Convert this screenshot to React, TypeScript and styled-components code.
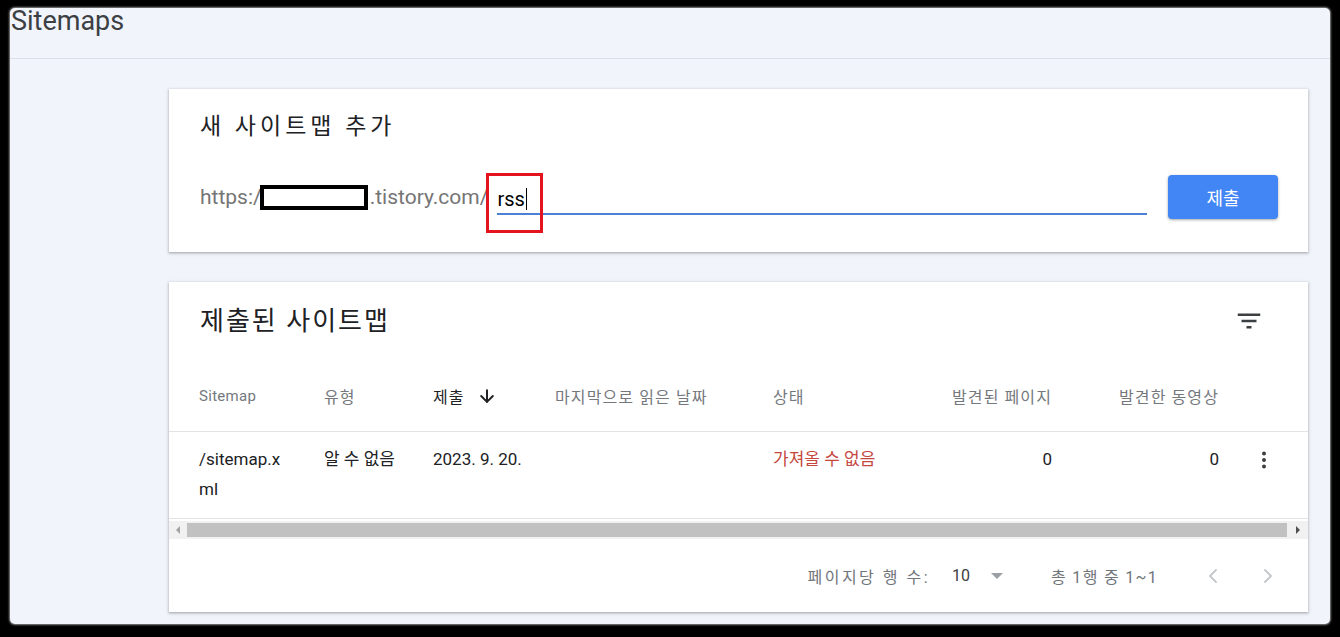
import React from 'react';
import styled, { createGlobalStyle } from 'styled-components';
import { ArrowDown, ChevronLeft, ChevronRight } from 'lucide-react';

const GlobalStyle = createGlobalStyle`
  html, body {
    margin: 0;
    padding: 0;
    background: #000;
  }

  body {
    font-family: Roboto, 'Noto Sans CJK KR', sans-serif;
    color: #202124;
  }

  * {
    box-sizing: border-box;
  }
`;

const COLUMNS = '125px 109px 122px 218px 162px 117px 167px 89px';

const Frame = styled.div`
  width: 1340px;
  height: 637px;
  padding: 8px 10px 13px 10px;
  background: #000;
`;

const Panel = styled.div`
  display: flex;
  flex-direction: column;
  height: 100%;
  background: #f1f4fb;
  border-radius: 5px;
  box-shadow: 0 0 2px 1px #8a8a8a;
`;

const PageHeader = styled.header`
  height: 51px;
  padding: 2px 0 0 1px;
  border-bottom: 1px solid #dadfe8;
`;

const PageTitle = styled.h1`
  margin: 0;
  color: #3c4043;
  font-size: 27px;
  font-weight: 400;
  line-height: 23px;
`;

const Content = styled.main`
  display: flex;
  flex-direction: column;
  gap: 30px;
  padding: 30px 22px 0 159px;
`;

const Card = styled.section`
  background: #fff;
  box-shadow: 0 1px 2px rgba(60, 64, 67, 0.3), 0 1px 3px 1px rgba(60, 64, 67, 0.15);
`;

const AddCard = styled(Card)`
  height: 163px;
  padding: 22px 30px 0 31px;
`;

const CardTitle = styled.h2<{ $size: number; $spacing: number }>`
  margin: 0;
  color: #202124;
  font-size: ${(p) => p.$size}px;
  font-weight: 400;
  line-height: 32px;
  letter-spacing: ${(p) => p.$spacing}px;
`;

const UrlRow = styled.div`
  display: flex;
  align-items: center;
  height: 44px;
  margin-top: 32px;
`;

const UrlPart = styled.span`
  color: #757575;
  font-size: 21px;
  white-space: nowrap;
`;

const Redacted = styled.span`
  display: inline-block;
  width: 108px;
  height: 25px;
  margin: 0 2px 0 -2px;
  background: #fff;
  border: 4px solid #000;
`;

const InputWrap = styled.div`
  position: relative;
  flex: 1;
  display: flex;
  align-items: center;
  height: 30px;
  margin: 6px 21px 0 9px;
  border-bottom: 2px solid #4a80d6;
`;

const InputText = styled.span`
  color: #000;
  font-size: 20px;
  line-height: 26px;
`;

const Caret = styled.span`
  width: 1px;
  height: 22px;
  margin-left: 1px;
  background: #000;
`;

const Highlight = styled.span`
  position: absolute;
  left: -11px;
  top: -12px;
  width: 57px;
  height: 60px;
  border: 3px solid #e3141e;
  pointer-events: none;
`;

const SubmitButton = styled.button`
  width: 110px;
  height: 44px;
  padding: 0;
  color: #fff;
  font-family: Roboto, 'Noto Sans CJK KR', sans-serif;
  font-size: 18px;
  background: #4285f4;
  border: none;
  border-radius: 4px;
  box-shadow: 0 1px 3px rgba(0, 0, 0, 0.35);
`;

const ListCard = styled(Card)`
  height: 330px;
  display: flex;
  flex-direction: column;
`;

const CardHead = styled.div`
  display: flex;
  align-items: center;
  justify-content: space-between;
  height: 78px;
  padding: 0 44px 0 31px;
`;

const GridRow = styled.div`
  display: grid;
  grid-template-columns: ${COLUMNS};
  padding-left: 30px;
  border-bottom: 1px solid #e3e3e3;
`;

const HeadRow = styled(GridRow)`
  height: 72px;
  align-items: center;
`;

const HeadCell = styled.div<{ $active?: boolean; $right?: boolean; $latin?: boolean }>`
  display: flex;
  align-items: center;
  justify-content: ${(p) => (p.$right ? 'flex-end' : 'flex-start')};
  gap: 12px;
  color: ${(p) => (p.$active ? '#202124' : '#74787d')};
  font-size: ${(p) => (p.$latin ? '15px' : '16px')};
  letter-spacing: ${(p) => (p.$latin ? '0.3px' : '1.1px')};
  white-space: nowrap;
`;

const DataRow = styled(GridRow)`
  padding-top: 12px;
  padding-bottom: 14px;
  align-items: start;
`;

const Cell = styled.div<{ $right?: boolean; $error?: boolean; $breakAll?: boolean }>`
  padding-right: ${(p) => (p.$breakAll ? '35px' : '0')};
  color: ${(p) => (p.$error ? '#c5483f' : '#202124')};
  font-size: 17px;
  line-height: 30px;
  text-align: ${(p) => (p.$right ? 'right' : 'left')};
  white-space: ${(p) => (p.$breakAll ? 'normal' : 'nowrap')};
  word-break: ${(p) => (p.$breakAll ? 'break-all' : 'normal')};
`;

const MenuCell = styled.div`
  display: flex;
  justify-content: center;
  padding-top: 4px;
`;

const ScrollBar = styled.div`
  display: flex;
  align-items: stretch;
  height: 18px;
  margin-top: 2px;
  background: #f1f1f1;
`;

const ScrollArrow = styled.div<{ $dir: 'left' | 'right'; $width: number }>`
  display: flex;
  align-items: center;
  justify-content: center;
  width: ${(p) => p.$width}px;

  &::before {
    content: '';
    border-top: 4px solid transparent;
    border-bottom: 4px solid transparent;
    ${(p) => (p.$dir === 'left' ? 'border-right: 4px solid #a3a3a3;' : 'border-left: 4px solid #505050;')}
  }
`;

const ScrollThumb = styled.div`
  flex: 1;
  margin: 2px 0;
  background: #c1c1c1;
`;

const Footer = styled.div`
  flex: 1;
  display: flex;
  align-items: center;
  justify-content: flex-end;
  padding-right: 28px;
  color: #70757a;
  font-size: 16px;
`;

const RowsLabel = styled.span`
  letter-spacing: 2.5px;
`;

const PerPage = styled.span`
  margin-left: 22px;
  color: #3c4043;
`;

const DropTriangle = styled.span`
  margin-left: 21px;
  border-left: 6px solid transparent;
  border-right: 6px solid transparent;
  border-top: 6px solid #9aa0a6;
`;

const Range = styled.span`
  margin-left: 48px;
  letter-spacing: 1.3px;
`;

const PagerButton = styled.span<{ $gap: number }>`
  display: flex;
  margin-left: ${(p) => p.$gap}px;
  color: #c4c7ca;
`;

const FilterIcon = () => (
  <svg width="30" height="30" viewBox="0 0 24 24" fill="#3c4043">
    <path d="M10 18h4v-2h-4v2zM3 6v2h18V6H3zm3 7h12v-2H6v2z" />
  </svg>
);

const MoreIcon = () => (
  <svg width="24" height="24" viewBox="0 0 24 24" fill="#3c4043">
    <circle cx="12" cy="5.5" r="2" />
    <circle cx="12" cy="12" r="2" />
    <circle cx="12" cy="18.5" r="2" />
  </svg>
);

const App = () => {
  return (
    <>
      <GlobalStyle />
      <Frame>
        <Panel>
          <PageHeader>
            <PageTitle>Sitemaps</PageTitle>
          </PageHeader>
          <Content>
            <AddCard>
              <CardTitle $size={23} $spacing={4}>
                새 사이트맵 추가
              </CardTitle>
              <UrlRow>
                <UrlPart>https:/</UrlPart>
                <Redacted />
                <UrlPart>.tistory.com/</UrlPart>
                <InputWrap>
                  <InputText>rss</InputText>
                  <Caret />
                  <Highlight />
                </InputWrap>
                <SubmitButton type="button">제출</SubmitButton>
              </UrlRow>
            </AddCard>

            <ListCard>
              <CardHead>
                <CardTitle $size={26} $spacing={2}>
                  제출된 사이트맵
                </CardTitle>
                <FilterIcon />
              </CardHead>
              <HeadRow>
                <HeadCell $latin>Sitemap</HeadCell>
                <HeadCell>유형</HeadCell>
                <HeadCell $active>
                  제출
                  <ArrowDown size={20} strokeWidth={2.4} color="#202124" />
                </HeadCell>
                <HeadCell>마지막으로 읽은 날짜</HeadCell>
                <HeadCell>상태</HeadCell>
                <HeadCell $right>발견된 페이지</HeadCell>
                <HeadCell $right>발견한 동영상</HeadCell>
                <HeadCell />
              </HeadRow>
              <DataRow>
                <Cell $breakAll>/sitemap.xml</Cell>
                <Cell>알 수 없음</Cell>
                <Cell>2023. 9. 20.</Cell>
                <Cell />
                <Cell $error>가져올 수 없음</Cell>
                <Cell $right>0</Cell>
                <Cell $right>0</Cell>
                <MenuCell>
                  <MoreIcon />
                </MenuCell>
              </DataRow>
              <ScrollBar>
                <ScrollArrow $dir="left" $width={18} />
                <ScrollThumb />
                <ScrollArrow $dir="right" $width={21} />
              </ScrollBar>
              <Footer>
                <RowsLabel>페이지당 행 수:</RowsLabel>
                <PerPage>10</PerPage>
                <DropTriangle />
                <Range>총 1행 중 1~1</Range>
                <PagerButton $gap={43}>
                  <ChevronLeft size={24} strokeWidth={1.8} />
                </PagerButton>
                <PagerButton $gap={31}>
                  <ChevronRight size={24} strokeWidth={1.8} />
                </PagerButton>
              </Footer>
            </ListCard>
          </Content>
        </Panel>
      </Frame>
    </>
  );
};

export default App;
